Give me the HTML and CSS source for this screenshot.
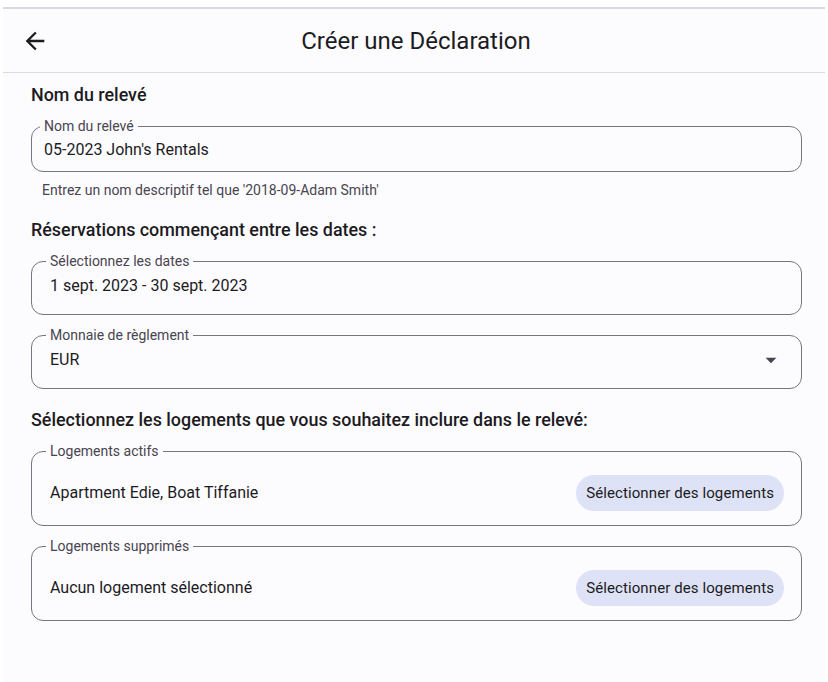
FILE: index.html
```html
<!DOCTYPE html>
<html lang="fr">
<head>
    <meta charset="UTF-8">
    <meta name="viewport" content="width=device-width, initial-scale=1.0">
    <title>Créer une Déclaration</title>
    <link rel="stylesheet" href="styles.css">
</head>
<body>

    <div class="screen">
        <header class="appbar">
            <button class="back-btn" type="button" aria-label="Retour">
                <svg viewBox="0 0 24 24" width="28" height="28"><path d="M20 11H7.83l5.59-5.59L12 4l-8 8 8 8 1.41-1.41L7.83 13H20v-2z" fill="#1c1b1f"/></svg>
            </button>
            <h1 class="appbar-title">Créer une Déclaration</h1>
            <span class="appbar-spacer"></span>
        </header>

        <form class="statement-form">
            <h2 class="section-title first">Nom du relevé</h2>
            <fieldset class="field field-compact">
                <legend>Nom du relevé</legend>
                <div class="field-value">05-2023 John's Rentals</div>
            </fieldset>
            <p class="helper">Entrez un nom descriptif tel que '2018-09-Adam Smith'</p>

            <h2 class="section-title">Réservations commençant entre les dates :</h2>
            <fieldset class="field">
                <legend>Sélectionnez les dates</legend>
                <div class="field-value">1 sept. 2023 - 30 sept. 2023</div>
            </fieldset>

            <fieldset class="field">
                <legend>Monnaie de règlement</legend>
                <div class="field-value select">
                    <span>EUR</span>
                    <svg viewBox="0 0 24 24" width="26" height="26"><path d="M7 10l5 5 5-5z" fill="#49454f"/></svg>
                </div>
            </fieldset>

            <h2 class="section-title">Sélectionnez les logements que vous souhaitez inclure dans le relevé:</h2>
            <fieldset class="field field-tall">
                <legend>Logements actifs</legend>
                <div class="field-value picker">
                    <span>Apartment Edie, Boat Tiffanie</span>
                    <button type="button" class="tonal-btn">Sélectionner des logements</button>
                </div>
            </fieldset>

            <fieldset class="field field-tall">
                <legend>Logements supprimés</legend>
                <div class="field-value picker">
                    <span>Aucun logement sélectionné</span>
                    <button type="button" class="tonal-btn">Sélectionner des logements</button>
                </div>
            </fieldset>
        </form>
    </div>

</body>
</html>
```

FILE: styles.css
```css
/* Page */
body {
    margin: 0;
    background: #ffffff;
    font-family: Roboto, "Noto Sans", Arial, sans-serif;
    color: #1c1b1f;
}

.screen {
    margin: 7px 3px 0 3px;
    border-top: 2px solid #d9d9e1;
    background: #fcfbfe;
    min-height: 673px;
}

/* App bar */
.appbar {
    display: grid;
    grid-template-columns: 60px 1fr 60px;
    align-items: center;
    height: 63px;
    border-bottom: 1px solid #dcdbe3;
}

.back-btn {
    display: flex;
    align-items: center;
    justify-content: center;
    background: none;
    border: none;
    padding: 0;
    margin-left: 18px;
    width: 28px;
    height: 28px;
    cursor: pointer;
}

.appbar-title {
    margin: 0;
    padding-left: 4px;
    text-align: center;
    font-size: 24px;
    font-weight: 400;
    color: #1c1b1f;
}

/* Form */
.statement-form {
    padding: 0 23px 0 28px;
}

.section-title {
    margin: 19px 0 11px;
    font-size: 17.9px;
    line-height: 24px;
    font-weight: 500;
    color: #1c1b1f;
}

.section-title.first {
    margin-top: 10px;
}

/* Outlined fields */
.field {
    margin: 0 0 12px;
    padding: 7px 18px 18px;
    border: 1px solid #79747e;
    border-radius: 12px;
    min-width: 0;
}

.field legend {
    padding: 0 4px;
    margin-left: -4px;
    font-size: 14px;
    line-height: 16px;
    color: #49454f;
}

.field-compact {
    padding: 6px 12px 11px;
    margin-bottom: 0;
}

.field-value {
    font-size: 16px;
    line-height: 20px;
    color: #1c1b1f;
}

.select {
    display: flex;
    align-items: center;
    justify-content: space-between;
    margin-right: -1px;
}

.select svg {
    margin: -3px 0;
}

.field-tall {
    padding: 16px 17px 14px 18px;
}

.picker {
    display: flex;
    align-items: center;
    justify-content: space-between;
}

.tonal-btn {
    height: 36px;
    padding: 0 10px;
    border: none;
    border-radius: 18px;
    background: #dee2f6;
    color: #1b1b21;
    font-family: inherit;
    font-size: 15px;
    letter-spacing: 0.1px;
    cursor: pointer;
}

/* Helper text */
.helper {
    margin: 9px 0 0 11px;
    font-size: 14px;
    line-height: 18px;
    color: #49454f;
}
```
